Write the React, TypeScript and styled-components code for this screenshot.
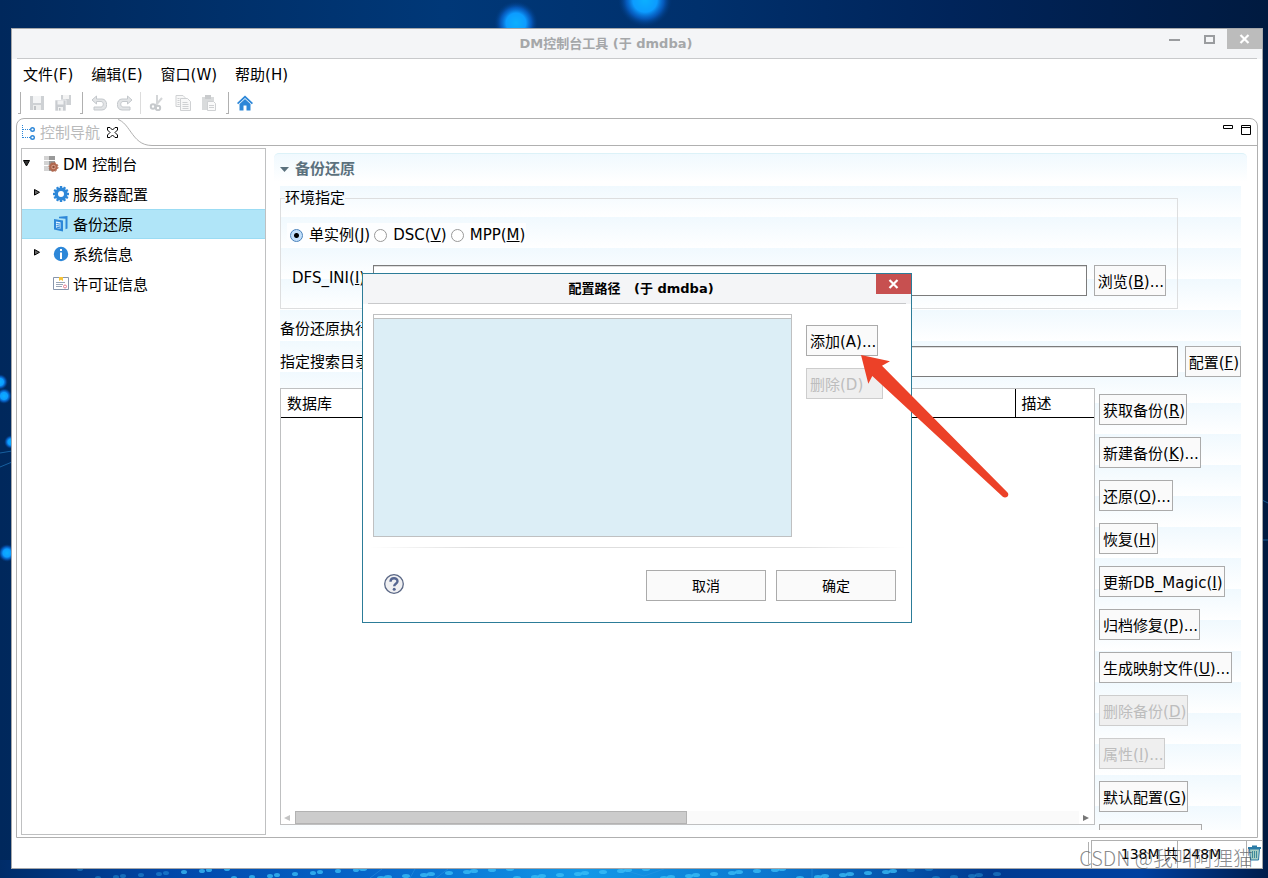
import React from "react";
import styled, { createGlobalStyle, css } from "styled-components";

const line = "#b0b0b0";

const GlobalStyle = createGlobalStyle`
  * { box-sizing: border-box; }
  body {
    margin: 0;
    color: #000;
    font: 15px/24px "DejaVu Sans", "Noto Sans CJK SC", sans-serif;
  }
  button, input { font: inherit; color: inherit; }
  svg { display: block; flex: none; }
`;

const Desktop = styled.div`
  position: relative;
  height: 100vh;
  display: flex;
  padding: 28px 5px 9px 11px;
  overflow: hidden;
  background: #002a63;
`;

const Wallpaper = styled.svg`
  position: absolute;
  inset: 0;
  width: 100%;
  height: 100%;
`;

const Window = styled.div`
  position: relative;
  flex: 1;
  min-width: 0;
  display: flex;
  flex-direction: column;
  border: 1px solid #a5a7aa;
  background: #fff;
`;

const TitleBar = styled.header`
  position: relative;
  flex: none;
  height: 30px;
  padding: 0 5px;
  background: #f4f5f7;
`;

const Title = styled.h1<{ $active?: boolean }>`
  margin: 0;
  height: 30px;
  padding: ${(p) => (p.$active ? "0 0 0 8px" : "0 62px 0 0")};
  border-bottom: 1px solid #c8c9cb;
  color: ${(p) => (p.$active ? "#000" : "#a5a7a9")};
  font-size: 13px;
  line-height: 30px;
  font-weight: bold;
  text-align: center;
  white-space: pre;
`;

const WindowButtons = styled.div`
  position: absolute;
  top: 0;
  right: 0;
  display: flex;
`;

const WindowButton = styled.button<{ $bg?: string }>`
  width: 35px;
  height: 20px;
  padding: 0;
  border: 0;
  display: grid;
  place-items: center;
  color: ${(p) => (p.$bg ? "#fff" : "#9a9c9f")};
  background: ${(p) => p.$bg || "transparent"};
`;

const MenuBar = styled.nav`
  display: flex;
  flex: none;
  gap: 18px;
  height: 32px;
  padding: 4px 11px;
`;

const MenuItem = styled.button`
  padding: 0;
  border: 0;
  background: none;
  white-space: nowrap;
`;

const ToolBar = styled.div`
  display: flex;
  flex: none;
  align-items: center;
  height: 27px;
  padding: 0 6px 3px;
`;

const ToolGroup = styled.div`
  display: flex;
  align-items: center;
  gap: 10px;
  height: 22px;
  padding: 0 9px 0 8px;
`;

const Handle = styled.span<{ $soft?: boolean }>`
  width: ${(p) => (p.$soft ? 1 : 3)}px;
  height: 22px;
  margin-left: ${(p) => (p.$soft ? -2 : 0)}px;
  border: solid ${(p) => (p.$soft ? "#dcdcdc" : line)};
  border-width: ${(p) => (p.$soft ? "0 1px 0 0" : "0 1px 1px 0")};
`;

const ToolButton = styled.button`
  padding: 0;
  border: 0;
  width: 16px;
  height: 16px;
  background: none;
`;

const Folder = styled.main`
  flex: 1;
  min-height: 0;
  margin: 0 4px;
  display: flex;
  flex-direction: column;
  border: 1px solid ${line};
  border-radius: 8px 8px 0 0;
`;

const TabBar = styled.div`
  display: flex;
  flex: none;
  height: 27px;
`;

const Tab = styled.div`
  display: flex;
  align-items: center;
  gap: 5px;
  padding-left: 5px;
  color: #b9babb;
`;

const TabClose = styled.button`
  padding: 0;
  border: 0;
  background: none;
  margin-left: 2px;
`;

const TabRest = styled.div`
  flex: 1;
  display: flex;
  justify-content: flex-end;
  gap: 8px;
  padding: 6px 6px 0 0;
  border-bottom: 1px solid ${line};
`;

const PaneButton = styled.button`
  padding: 0;
  border: 0;
  height: 10px;
  background: none;
`;

const Panes = styled.div`
  flex: 1;
  min-height: 0;
  display: flex;
`;

const Tree = styled.ul`
  flex: 0 0 245px;
  margin: 2px 0 2px 4px;
  padding: 0;
  list-style: none;
  border: 1px solid #bfc0c1;
`;

const TreeItem = styled.li<{ $selected?: boolean; $root?: boolean }>`
  display: flex;
  align-items: center;
  height: 30px;
  gap: 4px;
  padding-left: ${(p) => (p.$root ? 1 : 11)}px;
  border: solid transparent;
  border-width: 1px 0;
  ${(p) => p.$selected && css`
    background: #b0e5f8;
    border-color: #9bdcf4;
  `}
`;

const TreeLabel = styled.span`
  padding-top: 2px;
`;

const Twisty = styled.span`
  width: 16px;
  height: 16px;
`;

const Section = styled.section`
  flex: 1;
  min-width: 0;
  display: flex;
  flex-direction: column;
  margin: 7px 10px 7px 8px;
`;

const SectionTitle = styled.h2`
  flex: none;
  display: flex;
  align-items: center;
  gap: 6px;
  height: 31px;
  margin: 0 0 2px;
  padding: 0 6px;
  border-top: 1px solid #dcf2f8;
  border-radius: 5px 5px 0 0;
  background: linear-gradient(#f0f9fe, #fff 28px);
  color: #5b717d;
  font-size: 15px;
`;

const SectionBody = styled.div`
  flex: 1;
  min-height: 0;
  margin: 0 6px;
  display: flex;
  flex-direction: column;
  overflow: hidden;
  background: linear-gradient(#f0f9fe, #fff) 0 0 / 100% 31px;
`;

const Group = styled.fieldset`
  flex: none;
  min-width: 0;
  height: 123px;
  margin: 0 63px 0 0;
  padding: 0 11px 0 6px;
  border: 1px solid #dddedf;
`;

const Legend = styled.legend`
  margin-left: -2px;
  padding: 0;
`;

const Radios = styled.div`
  display: flex;
  padding-top: 13px;
`;

const RadioLabel = styled.label`
  display: flex;
  align-items: center;
  gap: 6px;
  height: 24px;
  padding: 0 1px 0 3px;
  background: #fdfeff;
  white-space: nowrap;
`;

const Radio = styled.input`
  appearance: none;
  width: 13px;
  height: 13px;
  margin: 0;
  border: 1px solid #999;
  border-radius: 50%;
  background: #fff;
  &:checked {
    border-color: #4a82bb;
    background: radial-gradient(circle, #000 2px, #c2dffa 3px);
  }
`;

const Field = styled.div<{ $inset?: boolean }>`
  flex: none;
  display: flex;
  align-items: center;
  gap: 7px;
  padding-left: ${(p) => (p.$inset ? 5 : 0)}px;
  margin-top: ${(p) => (p.$inset ? 18 : 0)}px;
`;

const FieldLabel = styled.label`
  flex: none;
  width: 90px;
  white-space: nowrap;
`;

const InsetLabel = styled(FieldLabel)`
  width: 74px;
  padding-bottom: 5px;
`;

const TextInput = styled.input`
  flex: 1;
  min-width: 0;
  height: 31px;
  padding: 0 4px;
  border: 1px solid #7b7b7b;
  box-shadow: inset 0 1px #dedede;
  background: #fff;
`;

const Caption = styled.p`
  flex: none;
  margin: 2px 0 0;
  height: 35px;
  line-height: 36px;
`;

const Button = styled.button<{ $wide?: boolean }>`
  flex: none;
  height: 31px;
  width: ${(p) => (p.$wide ? "120px" : "auto")};
  padding: ${(p) => (p.$wide ? "1px 0 0" : "3px 1px 0 3px")};
  border: 1px solid #ababab;
  font-size: ${(p) => (p.$wide ? 14 : 15)}px;
  line-height: 26px;
  background: #fafafa;
  text-align: ${(p) => (p.$wide ? "center" : "left")};
  white-space: nowrap;
  &:disabled {
    border-color: #cdcdcd;
    background: #efefef;
    color: #bdbdbd;
  }
`;

const Work = styled.div`
  flex: 1;
  min-height: 0;
  display: flex;
  gap: 4px;
  margin-top: 11px;
`;

const TableBox = styled.div`
  flex: 1;
  min-width: 0;
  display: flex;
  flex-direction: column;
  justify-content: space-between;
  margin-bottom: 5px;
  border: 1px solid #bfc0c1;
  background: #fff;
`;

const Table = styled.table`
  width: 100%;
  border-collapse: collapse;
  table-layout: fixed;
`;

const Th = styled.th<{ $last?: boolean }>`
  height: 28px;
  width: ${(p) => (p.$last ? "79px" : "auto")};
  padding: 3px 6px 0;
  border-bottom: 1px solid #000;
  border-left: ${(p) => (p.$last ? "1px solid #000" : 0)};
  font-weight: normal;
  text-align: left;
`;

const ScrollBar = styled.div`
  display: flex;
  align-items: center;
  gap: 4px;
  height: 13px;
  padding: 0 4px 0 3px;
`;

const ScrollTrack = styled.div`
  flex: 1;
  height: 13px;
  background: #fafafa;
`;

const ScrollThumb = styled.div`
  width: 50%;
  height: 13px;
  border: 1px solid #b2b2b2;
  background: #ccc;
`;

const Actions = styled.div`
  flex: 0 0 142px;
  display: flex;
  flex-direction: column;
  align-items: flex-start;
  gap: 12px;
  padding-top: 6px;
  overflow: hidden;
`;

const StatusBar = styled.footer`
  flex: none;
  display: flex;
  justify-content: flex-end;
  gap: 2px;
  height: 30px;
  padding-top: 2px;
`;

const StatusRule = styled.span`
  width: 1px;
  margin: 2px 0 4px;
  background: ${line};
`;

const Heap = styled.div`
  width: 156px;
  padding-left: 4px;
  border: solid ${line};
  border-width: 1px 1px 0;
  font-size: 14px;
  line-height: 26px;
  text-align: center;
  background: linear-gradient(${line}, ${line}) 85px 0 / 1px 100% no-repeat;
  white-space: nowrap;
`;

const TrashButton = styled.button`
  display: flex;
  align-items: flex-start;
  width: 15px;
  margin-left: -2px;
  padding: 4px 0 0 1px;
  border: 0;
  border-top: 1px solid ${line};
  background: none;
`;

const Watermark = styled.span`
  position: absolute;
  right: 9px;
  bottom: -2px;
  color: rgba(70, 72, 75, 0.65);
  font: 20px/24px "Noto Sans CJK SC", sans-serif;
  font-weight: 300;
  pointer-events: none;
`;

const Overlay = styled.div`
  position: absolute;
  inset: 0;
  display: grid;
  place-items: center;
  padding-bottom: 2px;
  pointer-events: none;
`;

const Dialog = styled.div`
  position: relative;
  width: 550px;
  border: 1px solid #2c7c98;
  background: #fff;
  pointer-events: auto;
`;

const DialogBody = styled.div`
  display: flex;
  align-items: flex-start;
  gap: 14px;
  padding: 10px 10px 0;
`;

const PathList = styled.div`
  width: 419px;
  height: 223px;
  padding-top: 3px;
  border: 1px solid #bfc0c1;
`;

const PathRows = styled.div`
  height: 218px;
  border-top: 1px solid #bfc0c1;
  background: #dceef6;
`;

const DialogActions = styled.div`
  display: flex;
  flex-direction: column;
  align-items: flex-start;
  gap: 12px;
  padding-top: 11px;
`;

const RemoveButton = styled(Button)`
  width: 77px;
`;

const Rule = styled.hr`
  height: 1px;
  margin: 10px 6px 0;
  border: 0;
  background: linear-gradient(90deg, #fff, #dedede 20%, #dedede 80%, #fff);
`;

const DialogFooter = styled.div`
  display: flex;
  align-items: center;
  gap: 10px;
  padding: 22px 15px 21px 21px;
`;

const HelpButton = styled.button`
  margin: -3px auto 0 0;
  padding: 0;
  border: 0;
  background: none;
`;

const Arrow = styled.svg`
  position: absolute;
  left: 497px;
  top: 80px;
  pointer-events: none;
`;

const dots = Array.from({ length: 66 }, (_, i) => ({
  x: 80 + i * 14 + ((i * 37) % 11),
  y: 869 + ((i * 29) % 10),
  r: i < 20 ? 3 : 4,
}));

function DesktopArt() {
  return (
    <Wallpaper viewBox="0 0 1268 878" preserveAspectRatio="none" aria-hidden="true">
      <defs>
        <linearGradient id="top">
          <stop offset="0" stopColor="#00285c" />
          <stop offset=".35" stopColor="#003878" />
          <stop offset=".55" stopColor="#00306c" />
          <stop offset=".75" stopColor="#00245a" />
          <stop offset="1" stopColor="#001a40" />
        </linearGradient>
        <linearGradient id="bottom">
          <stop offset="0" stopColor="#002c68" />
          <stop offset=".13" stopColor="#0046a8" />
          <stop offset=".3" stopColor="#0668cc" />
          <stop offset=".46" stopColor="#1298e8" />
          <stop offset=".62" stopColor="#0a74cc" />
          <stop offset=".78" stopColor="#003a90" />
          <stop offset=".9" stopColor="#0040a0" />
          <stop offset="1" stopColor="#001d4c" />
        </linearGradient>
        <radialGradient id="orb">
          <stop offset="0" stopColor="#0cb0ff" />
          <stop offset=".45" stopColor="#0c9cff" />
          <stop offset=".7" stopColor="#0868d8" stopOpacity=".7" />
          <stop offset="1" stopColor="#003a80" stopOpacity="0" />
        </radialGradient>
      </defs>
      <rect width="1268" height="878" fill="url(#top)" />
      <rect y="860" width="1268" height="18" fill="url(#bottom)" />
      <circle cx="516" cy="23" r="22" fill="url(#orb)" />
      <circle cx="645" cy="0" r="27" fill="url(#orb)" />
      <circle cx="0" cy="382" r="8" fill="url(#orb)" />
      <circle cx="4" cy="396" r="8" fill="url(#orb)" />
      <circle cx="11" cy="442" r="7" fill="url(#orb)" />
      <circle cx="7" cy="553" r="9" fill="url(#orb)" />
      <path d="M0 453l12-2M0 467l12-5M1262 540h6M1262 500l6 3M370 878l12-9M410 878l5-9M436 878l12-9M620 869l24 7 20-7M812 869v9" fill="none" stroke="#2d98e4" opacity=".5" />
      {dots.map((d, i) => (
        <ellipse key={i} cx={d.x} cy={d.y} rx={d.r} ry="2" fill="#3cc0f8" opacity={d.x < 180 || d.x > 900 ? 0.35 : 0.75} />
      ))}
    </Wallpaper>
  );
}

const CloseGlyph = () => (
  <svg width="11" height="10" viewBox="0 0 11 10"><path d="M1.5 1l8 8M9.500 1l-8 8" stroke="currentColor" strokeWidth="2.200" /></svg>
);

const tools: Record<string, React.ReactNode> = {
  保存: (
    <>
      <path d="M1 1h14v14H1z" fill="#ced1d4" /><path d="M4 1h8v7H4z" fill="#f4f5f6" /><path d="M4 10h8v5H4z" fill="#eceded" /><path d="M5 11h2v4H5z" fill="#c0c3c6" />
    </>
  ),
  全部保存: (
    <>
      <path d="M6 0h10v10H6z" fill="#ced1d4" /><path d="M8 0h6v4H8z" fill="#f4f4f4" /><path d="M0 5h11v11H0z" fill="#c9ccd0" stroke="#fff" strokeWidth=".6" /><path d="M2.500 5.500h6v4h-6zM3 12h5v4H3z" fill="#f1f2f3" /><path d="M4 13h1.500v2.500H4z" fill="#c0c3c6" />
    </>
  ),
  撤消: <path d="M5.500 1L1 5l4.500 4V6.500H10c3 0 3 5.500 0 5.500H3v3h8c6.500 0 6-11 0-11H5.500z" fill="#e2e4e6" stroke="#c4c8cc" />,
  重做: <path d="M10.500 1L15 5l-4.500 4V6.500H6c-3 0-3 5.500 0 5.500h7v3H5c-6.500 0-6-11 0-11h5.500z" fill="#e2e4e6" stroke="#c4c8cc" />,
};

const editTools: Record<string, React.ReactNode> = {
  剪切: (
    <g fill="none" stroke="#c6c9cc" strokeWidth="1.500"><path d="M8 0v9M13 3L6 11" stroke="#d4d6d8" strokeWidth="2" /><circle cx="4" cy="11.500" r="2.200" strokeWidth="2" /><circle cx="9" cy="13" r="2.200" strokeWidth="2" /></g>
  ),
  复制: (
    <g fill="#f8f8f8" stroke="#cfd1d3"><path d="M1 .5h7l2 2v9H1z" /><path d="M5.500 3.500h7l3 3v9h-10z" /><path d="M7.500 7.500h5M7.500 9.500h6M7.500 11.500h6M7.500 13.500h6M2.500 3.500h2M2.500 5.500h2M2.500 7.500h2M2.500 9.500h2" /></g>
  ),
  粘贴: (
    <g><path d="M1 2h12v13H1z" fill="#d9dbdc" /><path d="M4 0h6v4H4z" fill="#c9cbcd" /><path d="M6.500 6.500h6l2 2v7h-8z" fill="#fafafa" stroke="#cfd1d3" /><path d="M8 10.500h5M8 12.500h5" stroke="#cfd1d3" /></g>
  ),
};

const ToolIcon = ({ children }: { children: React.ReactNode }) => <svg width="16" height="16" viewBox="0 0 16 16">{children}</svg>;

const RightTwisty = () => <svg width="16" height="16" viewBox="0 0 16 16"><path d="M1.500 3.500l5 2.800-5 2.800z" fill="#666" stroke="#000" /></svg>;

const gear = Array.from({ length: 12 }, (_, i) => i * 30);

const treeItems = [
  {
    label: "服务器配置", open: true,
    icon: (
      <g fill="#2d87d8">
        {gear.map((a) => <rect key={a} x="6.800" y="0" width="2.400" height="4" transform={`rotate(${a} 8 8)`} />)}
        <circle cx="8" cy="8" r="4.700" fill="none" stroke="#2d87d8" strokeWidth="3.400" />
      </g>
    ),
  },
  {
    label: "备份还原", selected: true,
    icon: (
      <g fill="#2d87d8">
        <path d="M6 .8L14.500 0v12.500l-2 .8V2.800L6 2.300z" />
        <path d="M1 3l9 1.500v11L1 13.500z" />
        <path d="M3 5.500l4.500.8v6.500L3 12z" fill="#dff2ff" />
        <path d="M3.500 7.500l3.500.6M3.500 9.500l3.500.6M3.500 11.200l3.500.6" stroke="#2d87d8" />
      </g>
    ),
  },
  {
    label: "系统信息", open: true,
    icon: <g><circle cx="8" cy="8" r="7.200" fill="#2d87d8" /><path d="M8 3v2M8 6.500V13" stroke="#fff" strokeWidth="2" /></g>,
  },
  {
    label: "许可证信息",
    icon: (
      <g><path d="M.5 1.500h15v12H.5z" fill="#fff" stroke="#8795ab" /><path d="M3 6.500h9M3 8.500h7M3 10.500h6" stroke="#9aa5b6" /><path d="M6 1h4v4L8 3.800 6 5z" fill="#f5c33a" /><circle cx="12" cy="10.500" r="1.500" fill="#fff" stroke="#e77a8e" /></g>
    ),
  },
];

type Action = { text: string; mnemonic: string; more?: boolean; disabled?: boolean };

const actions: Action[] = [
  { text: "获取备份", mnemonic: "R" },
  { text: "新建备份", mnemonic: "K", more: true },
  { text: "还原", mnemonic: "O", more: true },
  { text: "恢复", mnemonic: "H" },
  { text: "更新DB_Magic", mnemonic: "I" },
  { text: "归档修复", mnemonic: "P", more: true },
  { text: "生成映射文件", mnemonic: "U", more: true },
  { text: "删除备份", mnemonic: "D", disabled: true },
  { text: "属性", mnemonic: "I", more: true, disabled: true },
  { text: "默认配置", mnemonic: "G" },
];

const Mnemonic = ({ text, mnemonic, more }: Action) => (
  <span>{text}(<u>{mnemonic}</u>){more && "..."}</span>
);

const ClippedButton = styled(Button)`
  width: 103px;
`;

function PathDialog() {
  return (
    <Dialog role="dialog" aria-modal="true" aria-labelledby="dialog-title">
      <TitleBar>
        <Title as="h2" id="dialog-title" $active>{"配置路径   (于 dmdba)"}</Title>
        <WindowButtons>
          <WindowButton $bg="#c75050" aria-label="关闭"><CloseGlyph /></WindowButton>
        </WindowButtons>
      </TitleBar>
      <DialogBody>
        <PathList><PathRows role="listbox" aria-label="路径" /></PathList>
        <DialogActions>
          <Button>添加(A)...</Button>
          <RemoveButton disabled>删除(D)</RemoveButton>
        </DialogActions>
      </DialogBody>
      <Rule />
      <DialogFooter>
        <HelpButton aria-label="帮助">
          <svg width="20" height="20" viewBox="0 0 20 20">
            <circle cx="10" cy="10" r="9.300" fill="#f0f0f2" stroke="#5a6785" strokeWidth="1.300" />
            <path d="M6.500 7.800C6.500 3 13.500 3.300 13.500 7.200c0 2.600-3.300 2.500-3.300 5" fill="none" stroke="#566691" strokeWidth="2.400" />
            <circle cx="10.200" cy="15.200" r="1.500" fill="#566691" />
          </svg>
        </HelpButton>
        <Button $wide>取消</Button>
        <Button $wide>确定</Button>
      </DialogFooter>
      <Arrow width="150" height="145" viewBox="860 354 150 145" aria-hidden="true">
        <path d="M861 355l29 6.300-8 4.400L1007.300 492.300c3 3-1.300 7-4.500 4.500L872.300 376l-4 7.700z" fill="#ec4128" />
      </Arrow>
    </Dialog>
  );
}

export default function App() {
  return (
    <Desktop>
      <GlobalStyle />
      <DesktopArt />
      <Window>
        <TitleBar>
          <Title>{"DM控制台工具 (于 dmdba)"}</Title>
          <WindowButtons>
            <WindowButton aria-label="最小化"><svg width="11" height="10"><path d="M0 5h11v2H0z" fill="currentColor" /></svg></WindowButton>
            <WindowButton aria-label="最大化"><svg width="11" height="9"><path d="M1 1h9v7H1z" fill="none" stroke="currentColor" strokeWidth="2" /></svg></WindowButton>
            <WindowButton $bg="#bcbcbc" aria-label="关闭"><CloseGlyph /></WindowButton>
          </WindowButtons>
        </TitleBar>

        <MenuBar>
          {["文件(F)", "编辑(E)", "窗口(W)", "帮助(H)"].map((m) => <MenuItem key={m}>{m}</MenuItem>)}
        </MenuBar>

        <ToolBar>
          <Handle />
          <ToolGroup>
            {["保存", "全部保存"].map((k) => <ToolButton key={k} disabled aria-label={k}><ToolIcon>{tools[k]}</ToolIcon></ToolButton>)}
          </ToolGroup>
          <Handle />
          <ToolGroup>
            {["撤消", "重做"].map((k) => <ToolButton key={k} disabled aria-label={k}><ToolIcon>{tools[k]}</ToolIcon></ToolButton>)}
          </ToolGroup>
          <Handle $soft />
          <ToolGroup>
            {Object.keys(editTools).map((k) => <ToolButton key={k} disabled aria-label={k}><ToolIcon>{editTools[k]}</ToolIcon></ToolButton>)}
          </ToolGroup>
          <Handle />
          <ToolGroup>
            <ToolButton aria-label="主页">
              <ToolIcon>
                <path d="M8 .5L0 8l1.200 1.200L8 3l6.800 6.200L16 8z" fill="#2d87d8" />
                <path d="M8 4L2.500 9V15.500h4v-5h3v5h4V9z" fill="#2d87d8" />
              </ToolIcon>
            </ToolButton>
          </ToolGroup>
        </ToolBar>

        <Folder>
          <TabBar>
            <Tab>
              <svg width="13" height="15" viewBox="0 0 13 15" fill="none" stroke="#2d87d8">
                <path d="M.5 0v14M1 4.500h7M1 12.500h7" strokeDasharray="1 1" />
                <circle cx="10.500" cy="4.500" r="1.800" strokeWidth="1.400" /><circle cx="10.500" cy="12.500" r="1.800" strokeWidth="1.400" />
              </svg>
              <span>控制导航</span>
              <TabClose aria-label="关闭标签">
                <svg width="11" height="11" viewBox="0 0 11 11"><path d="M.5.5h2.500L5.500 3 8 .5h2.500V3L8 5.500 10.500 8v2.500H8L5.500 8 3 10.500H.5V8L3 5.500.5 3z" fill="#fff" stroke="#000" /></svg>
              </TabClose>
            </Tab>
            <svg width="34" height="27" viewBox="0 0 34 27"><path d="M-5 -.5C13 0 12 26.500 34 26.500" fill="none" stroke={line} /></svg>
            <TabRest>
              <PaneButton aria-label="最小化面板"><svg width="10" height="10"><path d="M.5 .5h9v3h-9z" fill="#fff" stroke="#000" /></svg></PaneButton>
              <PaneButton aria-label="最大化面板"><svg width="10" height="10"><path d="M.5 .5h9v9h-9zM.5 2.500h9" fill="#fff" stroke="#000" /></svg></PaneButton>
            </TabRest>
          </TabBar>

          <Panes>
            <Tree role="tree">
              <TreeItem role="treeitem" $root>
                <Twisty><svg width="16" height="16"><path d="M.5 4.500h6L3.500 10z" fill="#333" stroke="#000" /></svg></Twisty>
                <svg width="16" height="16" viewBox="0 0 16 16">
                  <path d="M1 0h11v4H1zM1 5h11v4H1zM1 10h11v5H1z" fill="#999" /><path d="M1 0h5v4H1zM1 5h5v4H1zM1 10h5v5H1z" fill="#d3d3d3" />
                  <circle cx="10.500" cy="11" r="3.200" fill="#d9a08c" stroke="#b0674e" strokeWidth="2" /><circle cx="10.500" cy="11" r="4.500" fill="none" stroke="#b0674e" strokeDasharray="2 1.500" /><circle cx="10.500" cy="11" r="1.200" fill="#8c4c38" />
                </svg>
                <TreeLabel>DM 控制台</TreeLabel>
              </TreeItem>
              {treeItems.map((t) => (
                <TreeItem key={t.label} role="treeitem" $selected={t.selected} aria-selected={!!t.selected}>
                  <Twisty>{t.open && <RightTwisty />}</Twisty>
                  <svg width="16" height="16" viewBox="0 0 16 16">{t.icon}</svg>
                  <TreeLabel>{t.label}</TreeLabel>
                </TreeItem>
              ))}
            </Tree>

            <Section>
              <SectionTitle>
                <svg width="9" height="5"><path d="M0 0h9L4.500 5z" fill="#5b717d" /></svg>
                备份还原
              </SectionTitle>
              <SectionBody>
                <Group>
                  <Legend>环境指定</Legend>
                  <Radios>
                    <RadioLabel><Radio type="radio" name="mode" defaultChecked /><Mnemonic text="单实例" mnemonic="J" /></RadioLabel>
                    <RadioLabel><Radio type="radio" name="mode" /><Mnemonic text="DSC" mnemonic="V" /></RadioLabel>
                    <RadioLabel><Radio type="radio" name="mode" /><Mnemonic text="MPP" mnemonic="M" /></RadioLabel>
                  </Radios>
                  <Field $inset>
                    <InsetLabel htmlFor="ini"><Mnemonic text="DFS_INI" mnemonic="I" /></InsetLabel>
                    <TextInput id="ini" />
                    <Button><Mnemonic text="浏览" mnemonic="B" more /></Button>
                  </Field>
                </Group>
                <Caption>备份还原执行</Caption>
                <Field>
                  <FieldLabel htmlFor="dir">指定搜索目录</FieldLabel>
                  <TextInput id="dir" />
                  <Button><Mnemonic text="配置" mnemonic="F" /></Button>
                </Field>
                <Work>
                  <TableBox>
                    <Table>
                      <thead><tr><Th>数据库</Th><Th $last>描述</Th></tr></thead>
                    </Table>
                    <ScrollBar>
                      <svg width="7" height="8"><path d="M6 1v6L0 4z" fill="#c4c4c4" /></svg>
                      <ScrollTrack><ScrollThumb /></ScrollTrack>
                      <svg width="7" height="8"><path d="M0 1v6l6-3z" fill="#777" /></svg>
                    </ScrollBar>
                  </TableBox>
                  <Actions>
                    {actions.map((a) => <Button key={a.text} disabled={a.disabled}><Mnemonic {...a} /></Button>)}
                    <ClippedButton aria-label="更多" />
                  </Actions>
                </Work>
              </SectionBody>
            </Section>
          </Panes>
        </Folder>

        <StatusBar>
          <StatusRule />
          <Heap>138M 共 248M</Heap>
          <TrashButton aria-label="回收">
            <svg width="13" height="16" viewBox="0 0 13 16"><path d="M1.500 4h10l-1 11h-8z" fill="#a9cfc4" stroke="#2b7ba6" /><path d="M0 3h13M4 1.500h5" stroke="#2b7ba6" strokeWidth="2" /><path d="M4.500 6v7M6.500 6v7M8.500 6v7" stroke="#3d8a9a" /></svg>
          </TrashButton>
        </StatusBar>
        <Watermark>CSDN @我叫阿狸猫</Watermark>

        <Overlay><PathDialog /></Overlay>
      </Window>
    </Desktop>
  );
}
